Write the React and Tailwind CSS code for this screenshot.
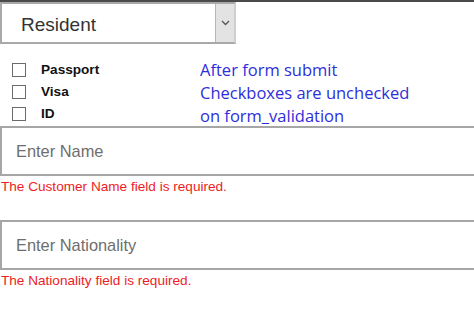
import React from 'react';

const docs = ["Passport", "Visa", "ID"];

const Field = ({ placeholder, error }) => (
  <div>
    <div className="w-[500px] h-[50px] border-2 border-[#a6a6a6] bg-white flex items-center pl-[14px]">
      <span className="text-[16.4px] text-[#6e6e6e]">{placeholder}</span>
    </div>
    <div className="text-[13.6px] leading-[18px] text-[#ee1c25] pl-[1px] pt-[2px]">{error}</div>
  </div>
);

export default function App() {
  return (
    <div className="w-[474px] h-[311px] overflow-hidden bg-white" style={{ fontFamily: '"Liberation Sans", Arial, sans-serif' }}>
      <div className="h-[2px] bg-[#4a4a4a]" />
      <div className="w-[236px] h-[42px] border-2 border-[#a9a9a9] border-r-[#cfcfcf] bg-white flex items-stretch">
        <div className="flex-1 flex items-center pl-[19px] pt-[5px] text-[19px] text-[#333]">Resident</div>
        <div className="w-[19px] bg-[#e3e3e3] border-l border-[#b5b5b5] flex items-center justify-center">
          <svg width="9" height="6" viewBox="0 0 9 6" fill="none">
            <path d="M1 1l3.5 3.5L8 1" stroke="#555" strokeWidth="1.3" />
          </svg>
        </div>
      </div>

      <div className="flex h-[82px]">
        <div className="w-[200px] pt-[19px] pl-[12px] flex flex-col gap-[8px]">
          {docs.map(d => (
            <div key={d} className="flex items-center h-[14px]">
              <div className="w-[14px] h-[14px] border border-[#6b6b6b] bg-white" />
              <span className="ml-[15px] text-[13.6px] font-bold text-[#111]">{d}</span>
            </div>
          ))}
        </div>
        <div className="pt-[14px] text-[16.5px] leading-[23px] text-[#2e2edb]" style={{ fontFamily: '"Open Sans", "Noto Sans", sans-serif' }}>
          <div>After form submit</div>
          <div>Checkboxes are unchecked</div>
          <div>on form_validation</div>
        </div>
      </div>

      <div className="flex flex-col gap-[24px]">
        <Field placeholder="Enter Name" error="The Customer Name field is required." />
        <Field placeholder="Enter Nationality" error="The Nationality field is required." />
      </div>
    </div>
  );
}
